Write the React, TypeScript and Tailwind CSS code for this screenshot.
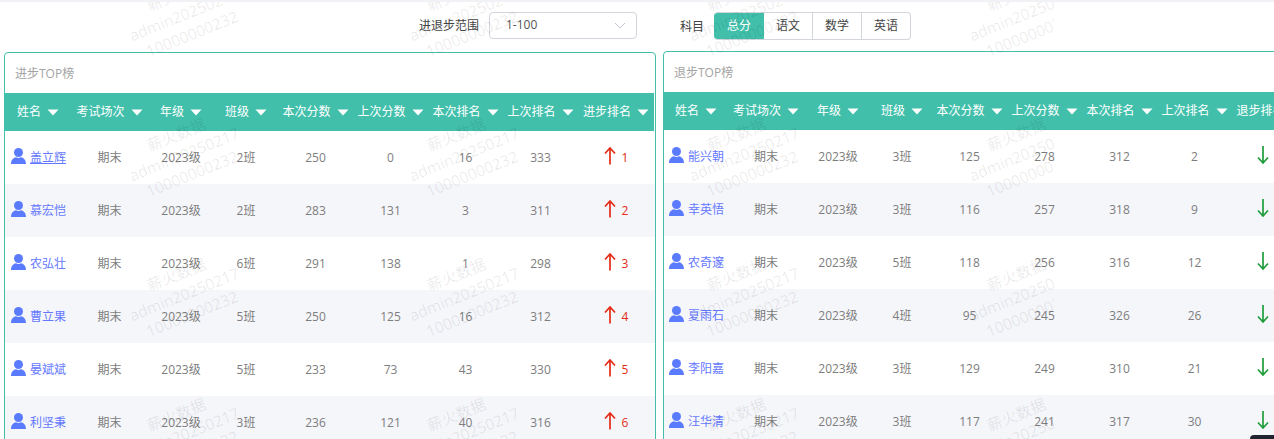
const leftRows = [
  ["盖立辉", "2023级", "2班", "250", "0", "16", "333", "1"],
  ["慕宏恺", "2023级", "2班", "283", "131", "3", "311", "2"],
  ["农弘壮", "2023级", "6班", "291", "138", "1", "298", "3"],
  ["曹立果", "2023级", "5班", "250", "125", "16", "312", "4"],
  ["晏斌斌", "2023级", "5班", "233", "73", "43", "330", "5"],
  ["利坚秉", "2023级", "3班", "236", "121", "40", "316", "6"],
];
const rightRows = [
  ["能兴朝", "2023级", "3班", "125", "278", "312", "2", ""],
  ["幸英悟", "2023级", "3班", "116", "257", "318", "9", ""],
  ["农奇邃", "2023级", "5班", "118", "256", "316", "12", ""],
  ["夏雨石", "2023级", "4班", "95", "245", "326", "26", ""],
  ["李阳嘉", "2023级", "3班", "129", "249", "310", "21", ""],
  ["汪华清", "2023级", "3班", "117", "241", "317", "30", ""],
];
const baseHeads = ["姓名", "考试场次", "年级", "班级", "本次分数", "上次分数", "本次排名", "上次排名"];

function Person() {
  return (
    <svg width="15" height="16" viewBox="0 0 15 16" className="shrink-0 mt-[-3px]">
      <circle cx="7.5" cy="4.5" r="4.5" fill="#5b7bff" />
      <path d="M0 16C0 12 2 10 5 9.2Q7.5 10.8 10 9.2C13 10 15 12 15 16Z" fill="#5b7bff" />
    </svg>
  );
}

function Tri() {
  return (
    <svg width="12" height="7" viewBox="0 0 12 7" className="shrink-0">
      <path d="M0.5 0.5H11.5L6 6.5Z" fill="#ffffff" />
    </svg>
  );
}

function Up() {
  return (
    <svg width="12" height="18" viewBox="0 0 12 18" fill="none" stroke="#e62b16" strokeWidth="1.7" className="shrink-0 mt-[-3px]">
      <path d="M6 1V17.5M1 6.5L6 1L11 6.5" />
    </svg>
  );
}

function Down() {
  return (
    <svg width="12" height="18" viewBox="0 0 12 18" fill="none" stroke="#1f9d3a" strokeWidth="1.7" className="shrink-0 mt-[-3px]">
      <path d="M6 0V17M1 11.5L6 17L11 11.5" />
    </svg>
  );
}

function Board({ title, lastHead, rows, cols, up, offset }: { title: string; lastHead: string; rows: string[][]; cols: string; up: boolean; offset: string }) {
  return (
    <div className={`shrink-0 w-[652px] h-[420px] border border-[#41bfab] rounded-[4px] bg-white ${offset}`}>
      <div className="h-[40px] flex items-center pt-[2px] pl-[10px] text-[12px] text-[#a3a3a3]">{title}</div>
      <div className={`grid ${cols} h-[38px] mr-[1px] bg-[#41bfab] text-white text-[12px]`}>
        {[...baseHeads, lastHead].map((h) => (
          <div key={h} className="flex items-center justify-center gap-[6px] whitespace-nowrap">
            <span>{h}</span>
            <Tri />
          </div>
        ))}
      </div>
      {rows.map((r, i) => (
        <div key={r[0]} className={`grid ${cols} h-[53px] text-[12px] text-[#7d7d7d] ${i % 2 === 1 ? "bg-[#f5f6fa]" : "bg-white"}`}>
          <div className={`flex items-center gap-[4px] whitespace-nowrap ${up ? "pl-[6px]" : "pl-[5px]"}`}>
            <Person />
            <span className={`text-[#6478ff] ${r[0] === "盖立辉" ? "underline" : ""}`}>{r[0]}</span>
          </div>
          <div className="flex items-center justify-center">期末</div>
          {r.slice(1, 7).map((v, k) => (
            <div key={k} className="flex items-center justify-center">{v}</div>
          ))}
          <div className="flex items-center justify-center gap-[6px]">
            {up ? <Up /> : <Down />}
            <span className={`w-[7px] ${up ? "text-[#e62b16]" : "text-[#1f9d3a]"}`}>{r[7]}</span>
          </div>
        </div>
      ))}
    </div>
  );
}

const cells = Array.from({ length: 20 }, (_, i) => i);

export default function App() {
  return (
    <div className="relative h-[439px] w-full overflow-hidden bg-white border-t-2 border-[#f0f2f5] font-['Open_Sans','Noto_Sans_CJK_SC',sans-serif]">
      <div className="flex items-start h-[50px] pl-[419px] pt-[10px] text-[12px] text-[#444444]">
        <span className="w-[70px] mt-[6px] leading-[16px]">进退步范围</span>
        <div className="flex items-center justify-between w-[148px] h-[27px] border border-[#d2d5dc] rounded-[4px] pl-[16px] pr-[10px] text-[#555555]">
          <span className="mt-[-1px]">1-100</span>
          <svg width="12" height="7" viewBox="0 0 12 7" fill="none" stroke="#c4c7cf" strokeWidth="1">
            <path d="M1 1L6 6L11 1" />
          </svg>
        </div>
        <span className="ml-[43px] w-[34px] mt-[7px] leading-[16px]">科目</span>
        <div className="flex h-[28px] w-[197px] border border-[#d2d5dc] border-l-0 rounded-[4px] overflow-hidden">
          <div className="flex w-[50px] items-center justify-center bg-[#41bfab] text-white">总分</div>
          <div className="flex w-[49px] items-center justify-center border-r border-[#d2d5dc]">语文</div>
          <div className="flex w-[49px] items-center justify-center border-r border-[#d2d5dc]">数学</div>
          <div className="flex flex-1 items-center justify-center">英语</div>
        </div>
      </div>
      <div className="flex items-start gap-[7px] pl-[4px]">
        <Board title="进步TOP榜" lastHead="进步排名" rows={leftRows} cols="grid-cols-[66px_77px_66px_64px_75px_75px_75px_75px_76px]" up offset="mt-0" />
        <Board title="退步TOP榜" lastHead="退步排名" rows={rightRows} cols="grid-cols-[64px_76px_68px_60px_75px_75px_75px_75px_75px]" up={false} offset="mt-[-1px]" />
      </div>
      <div className="absolute left-0 top-[-2px] w-[1054px] h-[441px] overflow-hidden pointer-events-none">
        <div className="absolute left-[-236px] top-[-56px] w-[1400px] flex flex-wrap">
          {cells.map((c) => (
            <div key={c} className="w-[280px] h-[140px] flex items-center justify-center">
              <div className="rotate-[-22deg] text-center text-[15.5px] leading-[21px] text-black/[.09] whitespace-nowrap">
                <div>薪火数据</div>
                <div>admin20250217</div>
                <div>10000000232</div>
              </div>
            </div>
          ))}
        </div>
      </div>
      <div className="absolute right-0 bottom-0 w-[24px] h-[4px] bg-[#1f2430] rounded-tl-[6px]" />
    </div>
  );
}
